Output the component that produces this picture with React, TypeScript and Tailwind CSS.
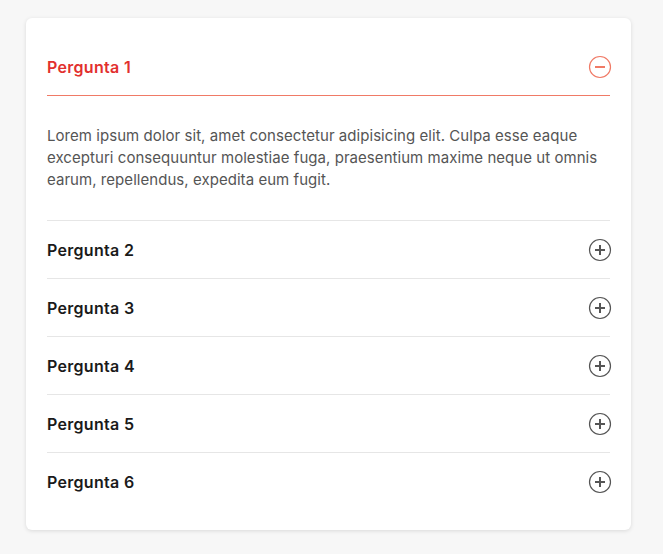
import { useState } from "react";

const ITEMS = [
  {
    title: "Pergunta 1",
    answer:
      "Lorem ipsum dolor sit, amet consectetur adipisicing elit. Culpa esse eaque excepturi consequuntur molestiae fuga, praesentium maxime neque ut omnis earum, repellendus, expedita eum fugit.",
  },
  { title: "Pergunta 2", answer: "Lorem ipsum dolor sit amet consectetur adipisicing elit." },
  { title: "Pergunta 3", answer: "Lorem ipsum dolor sit amet consectetur adipisicing elit." },
  { title: "Pergunta 4", answer: "Lorem ipsum dolor sit amet consectetur adipisicing elit." },
  { title: "Pergunta 5", answer: "Lorem ipsum dolor sit amet consectetur adipisicing elit." },
  { title: "Pergunta 6", answer: "Lorem ipsum dolor sit amet consectetur adipisicing elit." },
];

function ToggleIcon({ open }: { open: boolean }) {
  const color = open ? "#f07a66" : "#555555";
  return (
    <svg width="24" height="24" viewBox="0 0 24 24" fill="none">
      <circle cx="12" cy="12" r="10.5" stroke={color} strokeWidth="1.2" />
      <line x1="7" y1="12" x2="17" y2="12" stroke={color} strokeWidth="2" />
      {!open && <line x1="12" y1="7" x2="12" y2="17" stroke={color} strokeWidth="2" />}
    </svg>
  );
}

export default function App() {
  const [openIndex, setOpenIndex] = useState<number | null>(0);

  return (
    <div className="min-h-screen bg-[#f7f7f7] pt-[18px] px-[26px] font-['Inter',sans-serif]">
      <div className="w-[605px] bg-white rounded-md shadow-[0_1px_4px_rgba(0,0,0,0.12)] px-[21px] pt-[20px] pb-[20px]">
        {ITEMS.map((item, index) => {
          const open = openIndex === index;
          const last = index === ITEMS.length - 1;
          return (
            <div key={index} className={last ? "" : "border-b border-[#e6e6e6]"}>
              <button
                onClick={() => setOpenIndex(open ? null : index)}
                className={`w-full flex items-center justify-between text-left cursor-pointer ${
                  open ? "border-b border-[#f07a66] h-[58px]" : "h-[57px]"
                }`}
              >
                <span
                  className={`text-[16px] font-semibold tracking-[0.3px] ${
                    open ? "text-[#e2302e]" : "text-[#1a1a1a]"
                  }`}
                >
                  {item.title}
                </span>
                <span className="-mr-[2px]">
                  <ToggleIcon open={open} />
                </span>
              </button>
              {open && (
                <p className="pt-[29px] pb-[29px] text-[15px] leading-[22px] tracking-[0.05px] text-[#555555]">
                  {item.answer}
                </p>
              )}
            </div>
          );
        })}
      </div>
    </div>
  );
}
